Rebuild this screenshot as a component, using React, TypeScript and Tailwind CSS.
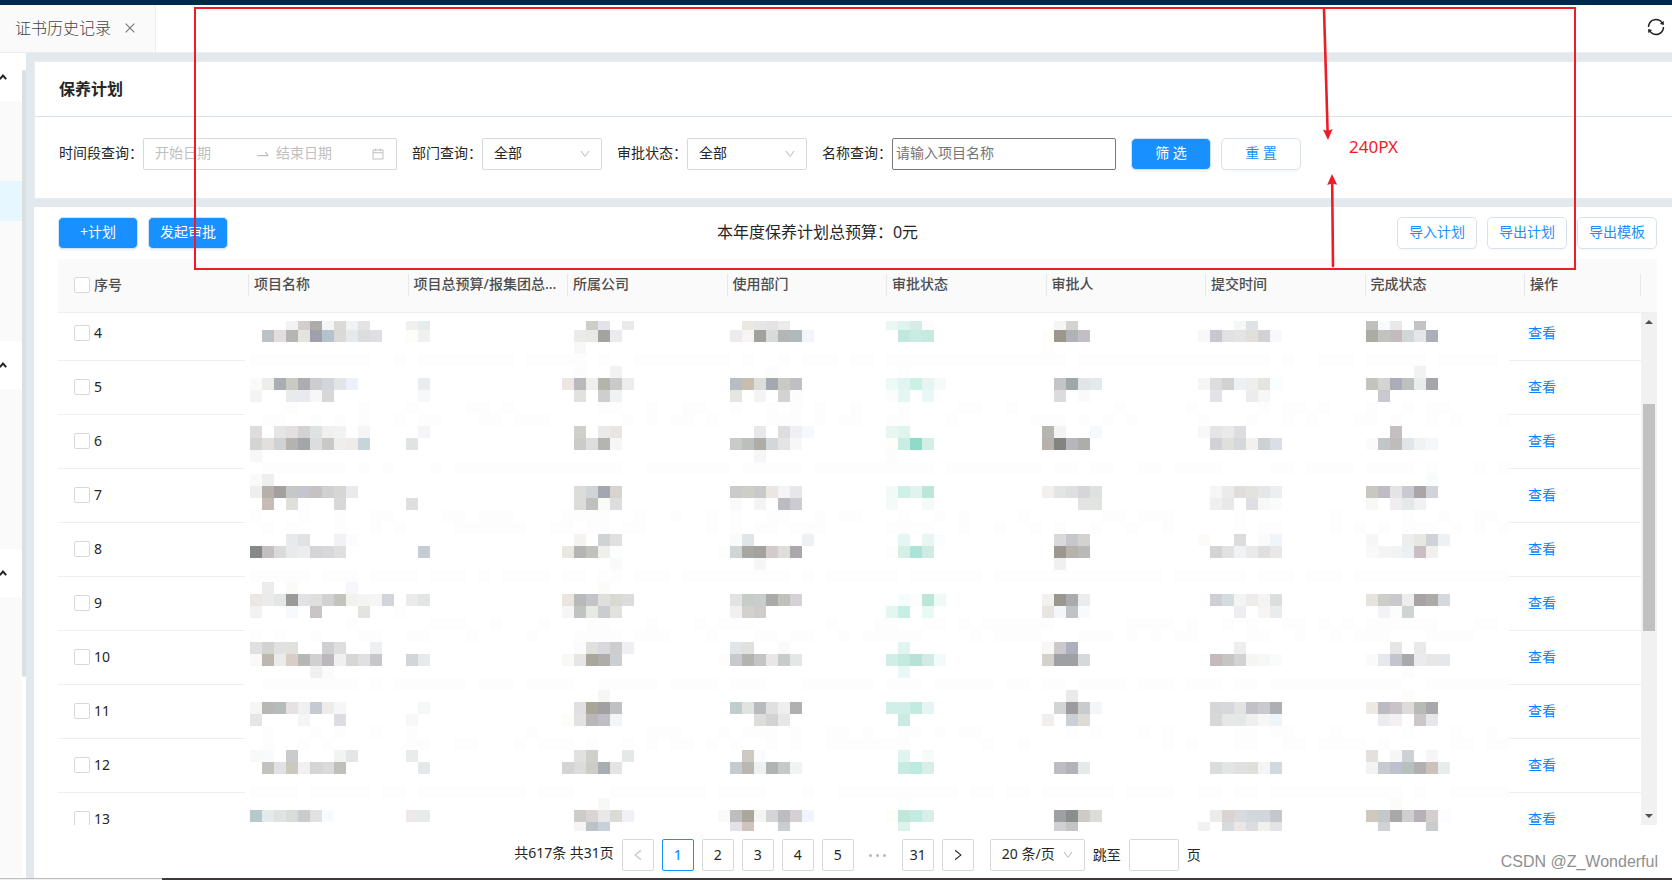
import type { ReactNode } from "react";
import {
  AiOutlineCalendar,
  AiOutlineClose,
  AiOutlineDown,
  AiOutlineLeft,
  AiOutlineRight,
  AiOutlineSwapRight,
  AiOutlineSync,
} from "react-icons/ai";

/* Mosaic cells: [line, first column, colours]. "-" is an empty cell, two digits are a grey. */
type Run = [number, number, string];

const CELL = 12;

const runs: Run[] = [
  // 4
  [0, 3, "f2 d4cdcd adaca8 f5 dbdad6 f2f2f5 e4e2e4"], [0, 13, "f0 e6ebeb"], [0, 28, "cccdc7 e3e4e9 - e9eaec"],
  [0, 41, "ebe8e1 e6 e3 eceaea"], [0, 53, "e9f7f4 ddf4ee d5ede5 fc"], [0, 67, "f5f5f4 d4d3d0"],
  [0, 82, "f5f6f6 dde3e4"], [0, 93, "c0c0bc f9fafd e8e8ea - c3c3c5"],
  [1, 1, "bbc1c4 e2dddf b7b4b5 e3e4df a09faa b3c2cc dad9d5 e4e9eb dc dfdfe1"], [1, 13, "fdfcf9 f0"],
  [1, 27, "ebebea e9eae7 a4a3a1 e9ebed"], [1, 40, "edebec f6f5f3 a2a19e d7dbdb b2b7b5 b1baba f4f5fa"],
  [1, 54, "c2e8dd c9ece2 c6e9e0"], [1, 66, "fefdf8 9b978d afb3b7 c1bfc4"],
  [1, 79, "f8f6f8 c8c6ce e0e1e1 e4e4e7 e2ded9 d2d2d4 f7f8fb"], [1, 93, "abaca3 c2c2c0 c4bbbe cfd8d6 e6e6e8 acafb8"],
  [2, 27, "f8"], [2, 66, "fefdfb"],
  // 5
  [4, 27, "fc - - f2"], [4, 43, "fc"], [4, 54, "fafefd"], [4, 97, "f2"],
  [5, 0, "fa ececea abaeb1 cacac5 aeacb2 cdcdce d4d5da e3e5e4 edf0fa"], [5, 14, "e9eded"],
  [5, 26, "ece6e2 b9b9bb f0efed b4b4af cacaca ebecee"], [5, 40, "b7bdc4 c8beb0 dddeda a4a9af c9cac6 c1bfc1"],
  [5, 53, "edf9f6 e0f5f0 ccefe6 e5f5f0 f4fafa"], [5, 67, "c3c3c8 9ea8a6 e2e4e5 e4e9e9"],
  [5, 79, "f5f5f4 dd d2 eff0f2 ee e5e5df f8fdfe"], [5, 93, "c4c4be d6d4d2 abacba bdc2c1 eaebeb a5a5aa"],
  [6, 0, "f4f4f2 - - e9eaec eae9ef f7 d7"], [6, 14, "f7f8fb"], [6, 27, "e1e1e0 - cecece f1f2f5"],
  [6, 40, "e6e5e1 - f4 - d2d4d3 fc"], [6, 53, "fafdfc e3f6f2 - e9f8f7"], [6, 67, "dbdbde - fa"],
  [6, 80, "e3e3e7 - - ec f7"], [6, 94, "c9c8cf"],
  // 6
  [9, 0, "dfdcde - e5 e3dfe0 d2 dde2e2 f0f1ef f1f2f4 - f4f6f5"], [9, 14, "f5f5f8"],
  [9, 27, "cfd0ca - ea e7e6e4"], [9, 42, "e8 - dedee0 eff0f2 f5f9fd"], [9, 53, "e8f6f2 def4ed"],
  [9, 66, "b6b6b1 f4f4f2 - - f7f8fb"], [9, 79, "f8f6f8 e5 e9 dddde0"], [9, 95, "c4bfc1"],
  [10, 0, "d4 e3dfdf d0d1d3 b4b3b0 a2a6a8 dddde0 c9c9c6 eeeeed efebeb c7d4da"], [10, 13, "e1e3e2"],
  [10, 27, "cbcbc7 dd b4b5b0 f6"], [10, 40, "ca bdbfbc aeada7 d4d7d9 e4e4e2 f6f7f6"],
  [10, 53, "fefdfa cbece2 8fdbc9 d2efe6"], [10, 66, "b6b1a9 838482 b6b6bd adadab"],
  [10, 80, "d1d2d8 dfdfdd d7d8dc f3f1ef ccd2d2 d9dfe5"], [10, 93, "fb c2c6c6 bfbdbb dfe5e8 f1f3f3 f4f8f9"],
  [11, 0, "f7"], [11, 42, "f6"], [11, 53, "fafdfc"],
  // 7
  [13, 0, "fa eeeeed"], [13, 98, "fafcfb"],
  [14, 0, "eeeeec b5b0ac a59f9f c5c8c6 c5c5cf c6c2c4 d0 d6d6d4 e9eaec"],
  [14, 27, "dcdddb d0d4d9 a3a7b0 d7d3cf"], [14, 40, "cb cdcec8 c9 ebe6e4 f4f4f5 e7e7e9"],
  [14, 53, "f1faf7 cdf0e8 dff4ee bde6db"], [14, 66, "f2f0ef e3e5e4 df d6d6d8 dfe1e0"],
  [14, 80, "f6 ebebec dfdedd e2e2de e4e6e8 ebeff2"], [14, 93, "c8c7c2 bebbc4 e4e4e7 c9cacf aba4a8 d2d3d9"],
  [15, 1, "c6bbb5 - e0dfda fd - - d8"], [15, 13, "dee0df"], [15, 27, "dcdcd8 bfbfbe fafaf8 dddddf"],
  [15, 40, "fa - f4 - bcbbc0 cdcbd1"], [15, 53, "f4faf8 - - f4faf8"], [15, 69, "e2e4e2 e2e4e2"],
  [15, 80, "efefed e8 - dfdee5 f7f8f7 fafcfb"], [15, 93, "f7f7f6 - efedf2 e3e8e9 f1"],
  // 8
  [18, 3, "e8e9eb e1e2e4 - - f2f2f4 fafcff"], [18, 27, "f4f3f1 - cfd3d3 e1dfe0"],
  [18, 40, "fa e0e5e8 - - - - eff0f2"], [18, 54, "e4f6f2 - e8f5f1 fbfeff"], [18, 67, "d9 c5c7ca d3d2d1"],
  [18, 79, "fcfbf9 - - dddcdc - fb eff5fa"], [18, 93, "f7f5f7 - - eceeed e7e7e4 d1d2d8 edf1f4"],
  [19, 0, "868a86 c4bec0 d9dbda e9eaec eceeed d4d3d8 d8d8da df"], [19, 14, "c5ccd4"],
  [19, 26, "e8e7e2 b4b4b4 c2c1bb efefeb fbfdff"], [19, 39, "fefdfc ced6d5 a6a79e a3a29f d4cacb dedfda aca6ad"],
  [19, 53, "fefdfc d6efe5 a9e3da ceece3"], [19, 67, "9b988f b8b2ad b9b9b7"],
  [19, 80, "d4 e0e2e1 f1f2f4 ea e0dede e9e8e7"], [19, 93, "f8f9f8 f4 f3f3f4 eaf1f4 cabec3 f0f0ec"],
  [20, 30, "fa"], [20, 42, "f6"], [20, 67, "f0"],
  // 9
  [22, 1, "ec - fafaf8 - - - - f6f7fa"], [22, 29, "fbfbf9"],
  [23, 0, "ebe7e2 eb e4e5e7 9a9a99 e2e2e5 dfdfdd d2 c4c4be f2f2ef f4 f5 d2d4dc"], [23, 13, "ebebe9 e1e5e5"],
  [23, 26, "ebe5e1 b6bab8 c3c4c7 dfdfde d9d9d2 dbdddb"], [23, 40, "e2 c8ccc6 cacdcd aaaaaa bfc1bb d6d1d4"],
  [23, 54, "f5fcfb fafdfc bde5da effaf7"], [23, 66, "f3f0ee 9b978e aaabad ec"],
  [23, 79, "fe cfced4 d5dcdf f3f5f5 eeeceb f5f3f3 d9dfde"], [23, 93, "e6e3df cecec8 c8c8ce eceeed a8a2a6 aeaaa5 d4d8e0"],
  [24, 0, "f1f0f3 - - f7f9fc - c9c5c6 - - - e3e4e2 - - fbfdff"], [24, 26, "f6 c1c3c2 e8e9e3 cbccce e1e2e0"],
  [24, 40, "f0 d3d1ce cecdcb"], [24, 53, "e4f6f0 c6eee4 - e9f9f5"], [24, 66, "e6e5e1 f5f6f9 bfc3c5 f8fafc"],
  [24, 82, "eeeef0 - f7f5f4 e9ebed"], [24, 94, "f3f2f6 fc d1d5d2"],
  // 10
  [27, 0, "e1e0e1 d2d2d0 e1 e1e1dc - - cfced1 dedee0 - - eeeff1"], [27, 27, "f9fbfd e0e1dd d8d9de cdcdcf eeeff2"],
  [27, 40, "dfe6e8 e2e0df - - fa"], [27, 54, "e1f4ef"], [27, 66, "faf6f6 cbc9cb acb0bc"],
  [27, 82, "ee"], [27, 95, "e5e5e8 - e9e9e7"],
  [28, 0, "f9f9f7 bdb7b2 ebebe9 d9cdc8 b7b7b6 d0 bab8bb f0 d6d6d4 e0e0e3 c7c6cb"], [28, 13, "d2d6d8 e6eaeb"],
  [28, 26, "f8f8f7 e6 a9a69c aeada9 cbcfd2"], [28, 39, "fefdfc c8c9cc b3b4b0 c4c4c7 e9e6e8 c8ccc8 e3e8e7"],
  [28, 53, "cfeee5 c4eadf b8e2d5 d0ebe3 f3fafa"], [28, 66, "d3d1cc 9ea0a3 a09fa3 d5d9d9"],
  [28, 80, "c4b9bd c5c5c3 d2d2d4 f5f5f4 f7 fafcfb"], [28, 93, "fa e6e9eb c4c4cd a8a9ad ebebed e7 e5e7eb"],
  [29, 5, "f0 fb"], [29, 54, "eaf7f7"], [29, 96, "fc"],
  // 11
  [31, 29, "f6f6f4"], [31, 68, "e9eae9"], [31, 96, "fcfcfa"],
  [32, 0, "f5 b7b7b6 b5bcba e6e2e3 f0f0f1 c5c9d1 eeeceb f6"], [32, 14, "f6f8f7"],
  [32, 27, "e0e0e1 a9a699 a1a1a3 c0c1c3"], [32, 40, "c1cdcc e1e3e1 b8bbbb e0 ee afb0af"],
  [32, 53, "d0efe7 cfefe8 c2ebe0 e4f5f3"], [32, 67, "d1d5d5 9c9ba0 c8cccd f5f6f9"],
  [32, 80, "d6 d7d8da e2e3e2 c2c0c8 c9cad0 acb0b4"], [32, 93, "ebe9e2 bcbac3 c9c3c9 dcdbd9 b8bab6 a8a8ac"],
  [33, 0, "e7e4e4 - - - f5f5f6 - - dcdce2"], [33, 13, "f7"], [33, 26, "fefcfb e2e2e3 b9b8b6 bfbec4 f4f5f8"],
  [33, 42, "dddddb d3d3d4 e7"], [33, 54, "c9ebe2"], [33, 66, "f0efee - cbd0d6 dcdbd5"],
  [33, 80, "d7d7d9 e6e8e8 e6e8e7 efefee f7 eff4f8"], [33, 94, "ebecee f3eff2 - cbc7c9 e6e7e9"],
  // 12
  [36, 0, "f8f9f8 f8fafd - c9cbcd - - - f2f4f3 e4e5e5"], [36, 13, "eaebeb"], [36, 27, "e1 cfd0cc - - e4e8e6"],
  [36, 41, "cdc9c3 fb"], [36, 54, "e2f4ef - f6fbfa"], [36, 93, "e3e0de - f6 cdd1d4 - f6"],
  [37, 1, "c2c2bf e1e1e3 c9c9c0 f2f0f3 d5 dadadd bfc0b9"], [37, 14, "e6e7e9"],
  [37, 26, "d4 dcdcda cccdc6 a7adb1 e4"], [37, 40, "c4cccf bab6b0 eef1f2 b0b5b4 c6cac6 f2f4f4"],
  [37, 54, "c7ebe2 bde9de d8efe8"], [37, 67, "bdbcc2 b3b2b8 e5e9e9"],
  [37, 80, "dbdcde e3e5e4 e0 dfdfdb f4f5f6 d2d8dd"], [37, 93, "f2f3f2 c9cace bec0cf b6c1be b2afb2 c9c2bb e8ecec"],
  // 13
  [40, 29, "f8f8f6"], [40, 54, "fbfefd"], [40, 95, "fbfbf9"],
  [41, 0, "b7c8cb e4e9ec e1e3e2 dadcd9 cacbcd e1e1e2 f9fafd"], [41, 13, "ede9e9 e6eaea"],
  [41, 27, "cccccb dad5d5 e8e8e7 dbdad5 f0f1f4"], [41, 39, "faf9f7 bdbebd aaa79d f4f4f2 d3d4d6 bdbdc1 d5d0d4 f1f4fa"],
  [41, 53, "fdfdfa c0e7da c2ebe2 d6efe8"], [41, 67, "9da1a4 8a8e8d cecac6 dbdddb"],
  [41, 80, "ebebec d9d4d2 dadadd d1d7db d3d6db c4c8cb"], [41, 93, "cfc8bc c4c8c9 a8a8aa cdd0cf b6b1b6 d4cfce fbfcff"],
  [42, 27, "f5 bac3c8 c8d0da"], [42, 40, "e1e2e6 cfc4bb - - c9cdcf"], [42, 54, "dcf3eb"], [42, 67, "cfcfd4 c4c4c3"],
  [42, 79, "f2f1ef - d6dbdf ebe7e6 dddde1 f0f0ed e2e3e5"], [42, 94, "cfd1d3 - - - c9cbce"],
];

/* Washed-out divider lines inside the mosaic: [line, column ranges]. */
const faint: [number, string][] = [
  [3, "0-9 12 14-21 23-27 29 32-39 41 44 46-48 50-51 53-67 69-84 86 89-91 93-97 99-103"],
  [7, "3 9 13 18-19 21 29-30 33 36-37 40 43 45 47 50 54 59-60 63 72 78 84 86-87 89 93 96 98-99"],
  [8, "1-2 5 7 9 12 14-15 19-20 22-24 31 33 35-36 38 43-45 47 49-50 53-54 58 65-67 69 71 73 79 83 86 88 92-93 95 98 100 104"],
  [12, "1-7 9 11 15 17-30 33-39 41-45 47-56 58-65 67-68 70-71 74-75 77-80 85-86 88-91 93-96 98 102 104"],
  [16, "0 4 7 10-11 16-17 19-21 26-29 32 35 38 40 43-44 47 49-50 54 57 59 64 71-72 74-76 82 90 96 99 102-103"],
  [17, "1 3 7 10 12 17-22 25-26 28-29 31-32 38 40 42-43 45-47 53-56 59 62 65 67 70 73 76 82 84-85 90 92 94 96-98 100 102 104"],
  [21, "0-4 6-8 10-13 15-17 19 21-24 26-27 29-30 32-34 36-44 46 48-53 55-60 62-75 77-82 84-86 88-90 92-104"],
  [25, "8 15-17 20 24 28-29 33 37 39-41 48 52-53 56-57 59 61-66 73-76 78 81 83 86-87 89 91 93-98 102-103"],
  [26, "0 2 5 9-10 13-14 18 23 27-30 32-34 38 42-43 45-46 49 51-55 60 62-65 69-71 73 75 77-78 83-84 87 90 92-94 98-101"],
  [30, "1-8 10 12-17 19-21 23-26 29-33 35-38 40-42 46-51 53-55 57-61 63-64 66-67 69-72 74-76 78-80 82-83 85-95 98-104"],
  [34, "1 5 7 10 13 23 33-35 39 41-43 45 48-49 51 54-55 57 59-60 68 70 74 76 82-83 85-86 90 96 100 103"],
  [35, "1 4 6 13-14 17-18 22 24-26 28 31 33 35-36 38 40 43 45 48-54 61 64 76 78 82-83 86-87 89-92 94 100-101 103-104"],
  [39, "0-3 5-9 11-12 14-22 24-26 30-37 39-42 46 49-58 60-61 63-64 66-71 73-76 79-80 82-83 85-95 97 100-104"],
];

function Mosaic() {
  return (
    <svg
      aria-hidden="true"
      viewBox="-5 3 1264 510"
      width={1264}
      height={510}
      shapeRendering="crispEdges"
      className="pointer-events-none absolute left-[187px] top-2 max-w-none"
    >
      <rect x={-5} y={3} width={1264} height={510} fill="#fff" />
      {faint.map(([line, spans]) =>
        spans.split(" ").map((span) => {
          const [from, to = from] = span.split("-").map(Number);
          return (
            <rect
              key={`${line}:${span}`}
              x={from * CELL}
              y={line * CELL}
              width={(to - from + 1) * CELL}
              height={CELL}
              fill="#fdfdfd"
            />
          );
        }),
      )}
      {runs.map(([line, first, colours]) =>
        colours.split(" ").map((c, i) =>
          c === "-" ? null : (
            <rect
              key={`${line}:${first + i}`}
              x={(first + i) * CELL}
              y={line * CELL}
              width={CELL}
              height={CELL}
              fill={`#${c.length === 2 ? c + c + c : c}`}
            />
          ),
        ),
      )}
    </svg>
  );
}

function CaretUp() {
  return (
    <svg width="8" height="6" viewBox="0 0 8 6" fill="none" stroke="#222" strokeWidth="2" aria-hidden="true">
      <path d="M0.8 5.2 4 1.6l3.2 3.6" />
    </svg>
  );
}

function MenuGroup({ items, active }: { items: number; active?: number }) {
  return (
    <div className="shrink-0">
      <div className="flex h-12 items-center bg-white">
        <span className="-ml-px">
          <CaretUp />
        </span>
      </div>
      {Array.from({ length: items }, (_, i) => (
        <div key={i} className={i === active ? "h-10 bg-[#e6f7ff]" : "h-10 bg-[#fafafa]"} />
      ))}
    </div>
  );
}

function OutlineButton({ children }: { children: ReactNode }) {
  return (
    <button
      type="button"
      className="h-8 w-20 rounded-[5px] border border-[#d9e1ec] bg-white pb-0.5 text-[#1890ff] shadow-[0_2px_0_rgba(0,0,0,0.02)]"
    >
      {children}
    </button>
  );
}

function PrimaryButton({ children }: { children: ReactNode }) {
  return (
    <button
      type="button"
      className="h-8 w-20 rounded-[5px] border border-[#d0e3f7] bg-[#1890ff] pb-0.5 text-white shadow-[0_2px_0_rgba(0,0,0,0.04)]"
    >
      {children}
    </button>
  );
}

function FilterSelect({ id, label }: { id: string; label: string }) {
  return (
    <div className="flex items-center">
      <label htmlFor={id} className="pb-0.5">{label}</label>
      <div className="relative">
        <select
          id={id}
          className="h-8 w-[120px] appearance-none rounded-[2px] border border-[#d9d9d9] bg-white pb-0.5 pl-[11px] outline-none"
        >
          <option>全部</option>
        </select>
        <AiOutlineDown className="pointer-events-none absolute right-[11px] top-2.5 size-3 text-[#bfbfbf]" />
      </div>
    </div>
  );
}

function Columns() {
  return (
    <colgroup>
      <col className="w-[191px]" />
      {Array.from({ length: 8 }, (_, i) => (
        <col key={i} />
      ))}
      <col className="w-[116px]" />
    </colgroup>
  );
}

const box = "size-4 shrink-0 appearance-none rounded-[2px] border border-[#d9d9d9] bg-white";

const headers = [
  "项目名称",
  "项目总预算/报集团总预算",
  "所属公司",
  "使用部门",
  "审批状态",
  "审批人",
  "提交时间",
  "完成状态",
  "操作",
];

const rows = [4, 5, 6, 7, 8, 9, 10, 11, 12, 13];

const pageItem = "flex size-8 items-center justify-center rounded-[2px] border";

function Annotations() {
  return (
    <>
      <div className="pointer-events-none absolute left-[194px] top-[7px] h-[263px] w-[1382px] border-2 border-[#ee1c25]" />
      <svg
        aria-hidden="true"
        width="20"
        height="260"
        viewBox="0 0 20 260"
        className="pointer-events-none absolute left-[1320px] top-2"
      >
        <path d="M4 1 7.6 123M13 258 12.2 176" stroke="#ee1c25" strokeWidth="2.6" strokeLinecap="round" />
        <path d="M8 132 3 121.400l4.600 1.600 5-2zM12 166l-4.800 11 4.800-1.600 5.200 1.400z" fill="#ee1c25" />
      </svg>
      <span className="absolute left-[1349px] top-[135px] text-[17px] leading-6 text-[#ee1c25]">240PX</span>
      <span className="absolute bottom-1.5 right-3.5 font-['Liberation_Sans',sans-serif] text-base text-[#8f8f8f] [text-shadow:1px_1px_1px_#fff]">
        CSDN @Z_Wonderful
      </span>
    </>
  );
}

export default function App() {
  return (
    <div className="relative flex h-screen flex-col overflow-hidden bg-[#e1e8ee] font-['Noto_Sans','Noto_Sans_CJK_SC',sans-serif] text-sm text-[#262626]">
      <div className="h-[5px] shrink-0 bg-[#00284d]" />
      <header className="flex h-12 shrink-0 items-center justify-between border-b border-[#ececec] bg-white">
        <div className="flex h-full items-center gap-3 border-r border-[#ececec] bg-[#fafafa] pl-[15px] pr-[18px] font-light">
          <a href="#history" className="pb-0.5 text-base text-[#444]">
            证书历史记录
          </a>
          <button type="button" aria-label="关闭" className="pb-0.5 text-[#777]">
            <AiOutlineClose className="size-3.5" />
          </button>
        </div>
        <button type="button" aria-label="刷新" className="pb-1 pr-1.5 text-[#222]">
          <AiOutlineSync className="size-5" />
        </button>
      </header>

      <div className="flex min-h-0 flex-1">
        <aside className="flex w-[26px] shrink-0 overflow-hidden bg-white">
          <nav className="flex w-[22px] flex-col">
            <MenuGroup items={6} active={2} />
            <MenuGroup items={4} />
            <MenuGroup items={7} />
          </nav>
          <div className="mt-[17px] h-[607px] w-1 rounded-full bg-[#dcdfe0]" />
        </aside>

        <main className="flex min-w-0 flex-1 flex-col gap-2 pl-2 pt-2">
          <section className="shrink-0 border border-r-0 border-[#ebebeb] bg-white">
            <h1 className="flex h-[55px] items-center border-b border-[#d8e1e9] pl-6 text-base font-semibold">保养计划</h1>
            <form className="flex items-center gap-[15px] pb-7 pl-6 pt-[21px]">
              <div className="flex items-center">
                <label htmlFor="from" className="pb-0.5">时间段查询：</label>
                <div className="flex h-8 w-[254px] items-center rounded-[2px] border border-[#d9d9d9] px-[11px]">
                  <input
                    id="from"
                    placeholder="开始日期"
                    className="min-w-0 flex-1 pb-0.5 outline-none placeholder:text-[#bfbfbf]"
                  />
                  <span className="flex w-[26px] justify-center text-[#bfbfbf]">
                    <AiOutlineSwapRight className="size-4" />
                  </span>
                  <input
                    aria-label="结束日期"
                    placeholder="结束日期"
                    className="min-w-0 flex-1 pb-0.5 outline-none placeholder:text-[#bfbfbf]"
                  />
                  <AiOutlineCalendar className="size-3.5 text-[#bfbfbf]" />
                </div>
              </div>
              <FilterSelect id="dept" label="部门查询：" />
              <FilterSelect id="status" label="审批状态：" />
              <div className="flex items-center">
                <label htmlFor="name" className="pb-0.5">名称查询：</label>
                <input
                  id="name"
                  placeholder="请输入项目名称"
                  className="h-8 w-56 rounded-[2px] border border-[#767676] px-[3px] pb-1 outline-none placeholder:text-[#757575]"
                />
              </div>
              <div className="flex gap-2.5">
                <PrimaryButton>筛 选</PrimaryButton>
                <OutlineButton>重 置</OutlineButton>
              </div>
            </form>
          </section>

          <section className="min-h-0 flex-1 bg-white pl-6 pr-[15px] pt-2.5">
            <div className="flex items-center">
              <div className="flex gap-2.5">
                <PrimaryButton>+计划</PrimaryButton>
                <PrimaryButton>发起审批</PrimaryButton>
              </div>
              <p className="flex-1 pb-0.5 pl-2.5 text-center text-base">本年度保养计划总预算：0元</p>
              <div className="flex gap-2.5">
                <OutlineButton>导入计划</OutlineButton>
                <OutlineButton>导出计划</OutlineButton>
                <OutlineButton>导出模板</OutlineButton>
              </div>
            </div>

            <div className="mt-2.5 border-b border-[#efefef] bg-[#fafafa] pr-4">
              <table className="w-full table-fixed text-left text-[#4d4d4d]">
                <Columns />
                <thead>
                  <tr className="h-[53px]">
                    <th scope="col" className="p-0 pb-px font-medium">
                      <span className="flex h-[22px] items-center gap-1 border-r border-[#e8e8e8] pl-4">
                        <input id="all" type="checkbox" className={box} />
                        <label htmlFor="all">序号</label>
                      </span>
                    </th>
                    {headers.map((h) => (
                      <th key={h} scope="col" className="p-0 pb-px font-medium">
                        <span className="block h-[22px] truncate border-r border-[#e8e8e8] pl-[5px] pr-1 leading-5">{h}</span>
                      </th>
                    ))}
                  </tr>
                </thead>
              </table>
            </div>

            <div className="relative">
              <div className="flex h-[calc(100vh-368px)] overflow-hidden">
                <div className="min-w-0 flex-1 overflow-hidden">
                  <table className="-mt-[7px] w-full table-fixed">
                    <Columns />
                    <tbody>
                      {rows.map((n) => (
                        <tr key={n} className="h-[54px] border-b border-[#efefef]">
                          <td className="p-0">
                            <span className="flex items-center gap-1 pl-4">
                              <input id={`row-${n}`} type="checkbox" className={box} />
                              <label htmlFor={`row-${n}`}>{n}</label>
                            </span>
                          </td>
                          <td colSpan={8} />
                          <td className="p-0 pl-[3px]">
                            <a href={`#plan-${n}`} className="text-[#0a84ff]">
                              查看
                            </a>
                          </td>
                        </tr>
                      ))}
                    </tbody>
                  </table>
                </div>
                <div className="flex w-4 shrink-0 flex-col items-center bg-[#f1f1f1]">
                  <svg width="8" height="4" viewBox="0 0 8 4" className="mt-[7px] shrink-0" aria-hidden="true">
                    <path d="M4 0 8 4H0z" fill="#505050" />
                  </svg>
                  <div className="mt-20 h-[227px] w-3 shrink-0 bg-[#c1c1c1]" />
                  <svg width="8" height="4" viewBox="0 0 8 4" className="mb-[7px] mt-auto shrink-0" aria-hidden="true">
                    <path d="M0 0h8L4 4z" fill="#505050" />
                  </svg>
                </div>
              </div>
              <Mosaic />
            </div>

            <nav aria-label="分页" className="mt-3.5 flex items-center justify-center gap-2">
              <span className="pb-1">共617条 共31页</span>
              <button type="button" aria-label="上一页" className={`${pageItem} border-[#d9d9d9] text-[#bfbfbf]`}>
                <AiOutlineLeft className="size-3.5" />
              </button>
              <button type="button" aria-current="page" className={`${pageItem} border-[#1890ff] font-medium text-[#1890ff]`}>
                1
              </button>
              {[2, 3, 4, 5].map((p) => (
                <button key={p} type="button" className={`${pageItem} border-[#d9d9d9]`}>
                  {p}
                </button>
              ))}
              <span className="flex size-8 items-center justify-center gap-1" aria-label="更多">
                <i className="size-[3px] rounded-full bg-[#b8b8b8]" />
                <i className="size-[3px] rounded-full bg-[#b8b8b8]" />
                <i className="size-[3px] rounded-full bg-[#b8b8b8]" />
              </span>
              <button type="button" className={`${pageItem} border-[#d9d9d9]`}>
                31
              </button>
              <button type="button" aria-label="下一页" className={`${pageItem} border-[#d9d9d9]`}>
                <AiOutlineRight className="size-3.5" />
              </button>
              <div className="relative ml-2">
                <select
                  aria-label="每页条数"
                  className="h-8 w-[95px] appearance-none rounded-[2px] border border-[#d9d9d9] bg-white pb-0.5 pl-[11px] outline-none"
                >
                  <option>20 条/页</option>
                </select>
                <AiOutlineDown className="pointer-events-none absolute right-[11px] top-2.5 size-3 text-[#bfbfbf]" />
              </div>
              <label htmlFor="jump">跳至</label>
              <input id="jump" className="h-8 w-[50px] rounded-[2px] border border-[#d9d9d9] px-2 outline-none" />
              <span>页</span>
            </nav>
          </section>
        </main>
      </div>

      <footer className="flex h-0.5 shrink-0">
        <div className="w-[162px] border-t border-[#bdbdbd] bg-[#f0f0f0]" />
        <div className="flex-1 bg-[#3d393b]" />
      </footer>
      <Annotations />
    </div>
  );
}
